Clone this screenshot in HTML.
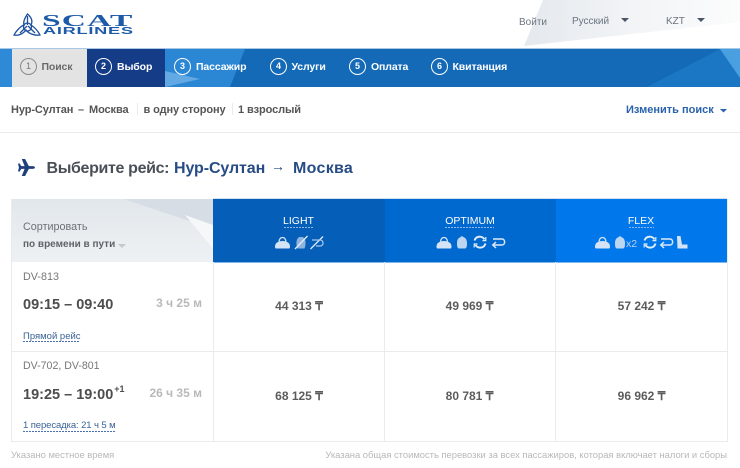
<!DOCTYPE html>
<html><head><meta charset="utf-8">
<style>
html,body{margin:0;padding:0;background:#fff}
#p{position:relative;width:740px;height:468px;overflow:hidden;background:#fff;font-family:"Liberation Sans",sans-serif;color:#555}
.t{position:absolute;white-space:nowrap;line-height:14px}
.b{font-weight:bold}
.r{position:absolute;background:#eaebec}
.c{position:absolute;top:58px;width:15px;height:15px;border:1px solid #fff;border-radius:50%;color:#fff;font-size:9px;font-weight:bold;text-align:center;line-height:15px}
.n{top:59.5px;color:#fff;font-weight:bold;font-size:10.5px;letter-spacing:-.12px}
.s{top:103px;font-size:11px;font-weight:bold;letter-spacing:-.1px;color:#555}
.p{font-weight:bold;font-size:12px;color:#5c5c5c;text-align:center;width:171px}
.fn{top:214px;color:#fff;font-size:10.5px;text-align:center}
.d{position:absolute;height:1px;background:repeating-linear-gradient(90deg,currentColor 0 2px,transparent 2px 3px)}
svg{position:absolute;overflow:visible}
</style></head><body><div id="p">

<svg style="left:0;top:0" width="740" height="49"><defs><linearGradient id="g1" x1="0" x2="1" y1="0" y2="0"><stop offset="0" stop-color="#e4e9ee"/><stop offset=".5" stop-color="#f2f4f6"/><stop offset="1" stop-color="#fcfcfd"/></linearGradient></defs>
<polygon points="543,0 740,0 740,22 524,46" fill="url(#g1)"/></svg>

<!-- logo -->
<svg style="left:13px;top:13px" width="30" height="24" viewBox="0 0 30 24" fill="none" stroke="#1d4f9c" stroke-width="1.3">
<path d="M14.500 1C11 6 10 9 11 12 8 13 3 18 1 22 5 23 10 21 13 17 15 20 21 23 27 22 25 18 21 14 18 12 20 8 18 4 14.500 1Z"/>
<path d="M14.500 3V12M7 20 14 13M22 20 15 13"/><circle cx="14.500" cy="14" r="4"/></svg>
<div class="t" style="left:42px;top:11px;font:bold 17px/20px 'Liberation Serif',serif;color:#1d5aa8;letter-spacing:.6px;transform:scaleX(1.97);transform-origin:0 0">SCAT</div>
<div class="t b" style="left:43px;top:26px;font-size:10px;line-height:11px;color:#1d5aa8;letter-spacing:.4px;transform:scaleX(1.82);transform-origin:0 0">AIRLINES</div>

<div class="t" style="left:519px;top:15.500px;font-size:10px;color:#6c7480">Войти</div>
<div class="t" style="left:572px;top:14.500px;font-size:10px;color:#6c7480">Русский</div>
<div class="t" style="left:666px;top:14.500px;font-size:10px;color:#6c7480">KZT</div>
<svg style="left:621px;top:18px" width="9" height="5"><path d="M0 0H8L4 4Z" fill="#4a5568"/></svg>
<svg style="left:697px;top:18px" width="9" height="5"><path d="M0 0H8L4 4Z" fill="#4a5568"/></svg>

<!-- nav -->
<div style="position:absolute;left:0;top:48px;width:740px;height:1px;background:#a9c8e6"></div>
<div style="position:absolute;left:0;top:49px;width:740px;height:38px;background:#146ab7"></div>
<svg style="left:0;top:49px" width="740" height="38"><polygon points="0,0 12,0 12,38 0,38" fill="#2e8ad6"/><polygon points="165,0 245,0 230,38 165,38" fill="#2b86d3"/><polygon points="165,22 200,30 165,38" fill="#63a9e4"/><polygon points="720,0 740,0 740,38 647,38" fill="#1b77c4"/><polygon points="720,0 740,0 740,29" fill="#4a9fe0"/></svg>
<div style="position:absolute;left:12px;top:49px;width:75px;height:38px;background:#e3e3e3"></div>
<div style="position:absolute;left:87px;top:49px;width:78px;height:38px;background:#143c87"></div>
<div class="c" style="left:20px;border-color:#8a8a8a;color:#777;font-weight:normal">1</div>
<div class="t n" style="left:41.5px;color:#6a6a6a">Поиск</div>
<div class="c" style="left:95px">2</div><div class="t n" style="left:117px">Выбор</div>
<div class="c" style="left:174px">3</div><div class="t n" style="left:196px">Пассажир</div>
<div class="c" style="left:270px">4</div><div class="t n" style="left:291.5px">Услуги</div>
<div class="c" style="left:349px">5</div><div class="t n" style="left:371px">Оплата</div>
<div class="c" style="left:431px">6</div><div class="t n" style="left:452.5px">Квитанция</div>

<!-- summary -->
<div class="t s" style="left:11px">Нур-Султан</div>
<div class="t s" style="left:78px">–</div>
<div class="t s" style="left:89px">Москва</div>
<div class="r" style="left:137px;top:103px;width:1px;height:12px"></div>
<div class="t s" style="left:143.5px">в одну сторону</div>
<div class="r" style="left:232px;top:103px;width:1px;height:12px"></div>
<div class="t s" style="left:238px">1 взрослый</div>
<div class="t b" style="left:626px;top:103px;font-size:11px;color:#2a63ad">Изменить поиск</div>
<svg style="left:720px;top:109px" width="8" height="4"><path d="M0 0H7L3.500 3.500Z" fill="#2a63ad"/></svg>
<div class="r" style="left:0;top:132px;width:740px;height:1px"></div>

<!-- title -->
<svg style="left:18px;top:159px" width="17" height="17" viewBox="0 0 18 18"><path d="M0 5 1.500 4.500 3.500 7.500H7L4 0H7.500L11.500 7.500H15.500C17 7.500 18 8.300 18 9S17 10.500 15.500 10.500H11.500L7.500 18H4L7 10.500H3.500L1.500 13.500 0 13 1 9Z" fill="#1f3f7c"/></svg>
<div class="t" style="left:46.500px;top:160px;font-size:16px;line-height:17px;font-weight:bold;color:#4a4f57;letter-spacing:-.35px">Выберите рейс:</div>
<div class="t" style="left:174px;top:160px;font-size:16px;line-height:17px;font-weight:bold;color:#274c85;letter-spacing:-.1px">Нур-Султан</div>
<div class="t" style="left:271px;top:158px;font-size:14px;line-height:17px;color:#274c85">→</div>
<div class="t" style="left:293px;top:160px;font-size:16px;line-height:17px;font-weight:bold;color:#274c85;letter-spacing:.3px">Москва</div>

<!-- table head -->
<div style="position:absolute;left:12px;top:199px;width:201px;height:63px;background:linear-gradient(#e2e7eb,#eef1f4)"></div>
<svg style="left:12px;top:199px" width="201" height="63"><polygon points="112,0 201,0 201,30" fill="#d6dde4"/><polygon points="173,16 201,26 201,50" fill="#f5f7f8"/></svg>
<div style="position:absolute;left:213px;top:199px;width:171.500px;height:63px;background:#055eb8"></div>
<div style="position:absolute;left:384.500px;top:199px;width:171px;height:63px;background:#0069cf"></div>
<div style="position:absolute;left:555.500px;top:199px;width:171.500px;height:63px;background:#0077ea"></div>
<div style="position:absolute;left:213px;top:198px;width:514px;height:1px;background:#cfdff0"></div>
<div style="position:absolute;left:213px;top:262px;width:514px;height:1px;background:#7db5ee"></div>

<div class="t" style="left:23px;top:220px;font-size:10.800px;color:#6e7278">Сортировать</div>
<div class="t b" style="left:23px;top:238px;font-size:10px;color:#5f6368">по времени в пути</div>
<svg style="left:118px;top:244px" width="9" height="5"><path d="M0 0H8L4 4Z" fill="#c4c8cc"/></svg>

<div class="t fn" style="left:213px;width:171px">LIGHT</div>
<div class="d" style="left:284px;top:227px;width:30px;color:#8fb8e6"></div>
<div class="t fn" style="left:384.500px;width:171px">OPTIMUM</div>
<div class="d" style="left:445px;top:227px;width:49px;color:#8fb8e6"></div>
<div class="t fn" style="left:555.500px;width:171px">FLEX</div>
<div class="d" style="left:629px;top:227px;width:25px;color:#8fb8e6"></div>

<!-- fare icons -->
<svg style="left:0;top:0" width="740" height="468">
<defs>
<g id="bag"><path d="M1 12.500Q0 12.500 0 10.500C0 7 3 5 7.500 5S15 7 15 10.500Q15 12.500 14 12.500Z" fill="#d4e3f5"/><path d="M4 5.500C4.500 2.500 5.500 1.500 7.500 1.500S10.500 2.500 11 5.500" fill="none" stroke="#d4e3f5" stroke-width="1.300"/></g>
<g id="lug"><path d="M2 12.500C0 12.500 0 9 0 7 0 3 2 1.500 3.500 1.200 4 0 6 0 6.500 1.200 8 1.500 10 3 10 7 10 9 10 12.500 8 12.500Z" fill="#bcd5f0"/></g>
<g id="ref" fill="none" stroke="#e2edfa" stroke-width="1.900"><path d="M1.500 4.500A5.500 5.500 0 0 1 11.500 3.500"/><path d="M12.500 7.500A5.500 5.500 0 0 1 2.500 9"/><path d="M12.800 1V4.600H9.500M1.200 11.500V8H4.500" stroke-width="1.200"/></g>
<g id="ret" fill="none" stroke="#dde9f8" stroke-width="1.500"><path d="M1.500 3H10.500C14 3 14 9 10.500 9H1.500"/><path d="M4.500 6 1.300 9 4.500 12"/></g>
</defs>
<!-- LIGHT -->
<use href="#bag" x="275" y="236"/>
<g transform="translate(296 236)"><path d="M1.500 12.500C0 9 0 4 2 2 3 .5 7 .5 8 2 10 4 10 9 8.500 12.500Z" fill="#8fb4e0"/></g>
<path d="M295 249 307.500 236" stroke="#e4eefa" stroke-width="1.300"/>
<path d="M310.500 249 323 236.500" stroke="#dde9f8" stroke-width="1.300"/>
<path d="M312 240H320C324 240 324 246 320 246H316" fill="none" stroke="#a8c6ea" stroke-width="1.300"/>
<!-- OPTIMUM -->
<use href="#bag" x="436.500" y="236"/>
<use href="#lug" x="457" y="236"/>
<use href="#ref" x="473" y="236"/>
<use href="#ret" x="491.500" y="236"/>
<!-- FLEX -->
<use href="#bag" x="595" y="236"/>
<use href="#lug" x="615" y="236"/>
<use href="#ref" x="643" y="236"/>
<use href="#ret" x="659.500" y="236"/>
<path d="M677 236H680.500L682 244.500H687.500V248.500H677.500Z" fill="#d4e3f5"/>
</svg>
<div class="t" style="left:626px;top:236.500px;font-size:10.500px;color:#b9d4f3">x2</div>

<!-- grid -->
<div class="r" style="left:11px;top:199px;width:1px;height:242px"></div>
<div class="r" style="left:213px;top:262px;width:1px;height:179px"></div>
<div class="r" style="left:384px;top:262px;width:1px;height:179px"></div>
<div class="r" style="left:555px;top:262px;width:1px;height:179px"></div>
<div class="r" style="left:727px;top:199px;width:1px;height:242px"></div>
<div class="r" style="left:11px;top:351px;width:717px;height:1px"></div>
<div class="r" style="left:11px;top:441px;width:717px;height:1px"></div>

<!-- row 1 -->
<div class="t" style="left:23px;top:270px;font-size:10.800px;color:#777">DV-813</div>
<div class="t b" style="left:23px;top:298px;font-size:14.500px;color:#4d4d4d">09:15 – 09:40</div>
<div class="t b" style="right:538px;top:296px;font-size:12px;color:#b9b9b9">3 ч 25 м</div>
<div class="t" style="left:23px;top:330px;font-size:9.500px;color:#3b6297">Прямой рейс</div>
<div class="d" style="left:23px;top:341px;width:56px;color:#4a6fb0"></div>
<div class="t p" style="left:213.500px;top:299px">44 313 ₸</div>
<div class="t p" style="left:384px;top:299px">49 969 ₸</div>
<div class="t p" style="left:556px;top:299px">57 242 ₸</div>

<!-- row 2 -->
<div class="t" style="left:23px;top:359px;font-size:10.600px;color:#777">DV-702, DV-801</div>
<div class="t b" style="left:23px;top:388px;font-size:14.500px;color:#4d4d4d">19:25 – 19:00<sup style="font-size:9px;line-height:0;position:relative;top:-1px;vertical-align:super;margin-left:1px">+1</sup></div>
<div class="t b" style="right:538px;top:386px;font-size:12px;color:#b9b9b9">26 ч 35 м</div>
<div class="t" style="left:23px;top:419px;font-size:9.500px;letter-spacing:-.1px;color:#3b6297">1 пересадка: 21 ч 5 м</div>
<div class="d" style="left:23px;top:431px;width:92px;color:#4a6fb0"></div>
<div class="t p" style="left:213.500px;top:389px">68 125 ₸</div>
<div class="t p" style="left:384px;top:389px">80 781 ₸</div>
<div class="t p" style="left:556px;top:389px">96 962 ₸</div>

<!-- footer -->
<div class="t" style="left:11px;top:448px;font-size:9.400px;color:#b8b8b8">Указано местное время</div>
<div class="t" style="right:13px;top:448px;font-size:9.400px;color:#b8b8b8">Указана общая стоимость перевозки за всех пассажиров, которая включает налоги и сборы</div>

</div></body></html>
